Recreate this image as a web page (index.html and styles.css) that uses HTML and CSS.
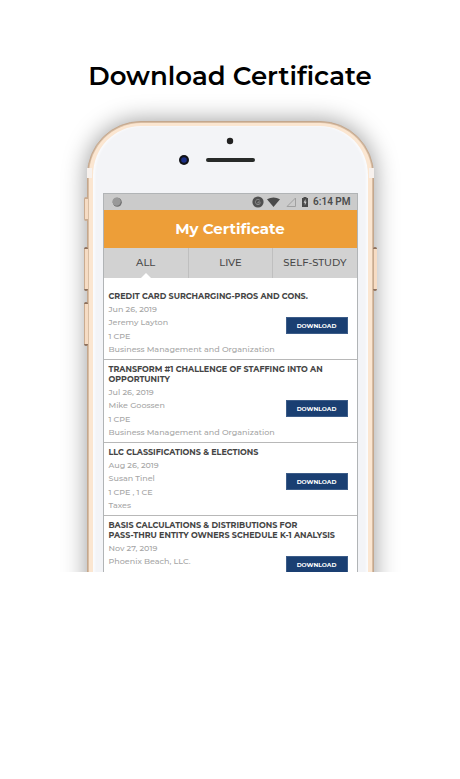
FILE: index.html
```html
<!DOCTYPE html>
<html lang="en">
<head>
<meta charset="utf-8">
<meta name="viewport" content="width=device-width, initial-scale=1">
<title>Download Certificate</title>
<link rel="stylesheet" href="styles.css">
</head>
<body>
<main class="promo">
  <h1 class="promo-title">Download Certificate</h1>
  <div class="phone">
    <span class="side-key mute"></span>
    <span class="side-key volume-up"></span>
    <span class="side-key volume-down"></span>
    <span class="side-key power"></span>
    <span class="band band-left"></span>
    <span class="band band-right"></span>
    <div class="phone-face">
      <svg class="sensors" viewBox="0 0 110 32" aria-hidden="true">
        <circle cx="55" cy="5" r="3.2" fill="#222"/>
        <circle cx="9" cy="24" r="5" fill="#111217"/>
        <circle cx="9" cy="24" r="2.8" fill="#1b2f87"/>
        <rect x="31" y="22" width="49" height="4" rx="2" fill="#272a29"/>
      </svg>
      <div class="screen">
        <div class="status">
          <svg class="status-dot" viewBox="0 0 10 10" aria-hidden="true">
            <circle cx="5.3" cy="5.3" r="4.5" fill="#6f6f6f"/>
            <circle cx="4.6" cy="4.6" r="4.2" fill="#999"/>
          </svg>
          <svg class="status-icons" viewBox="0 0 58 12" aria-hidden="true">
            <circle cx="6" cy="6" r="5.6" fill="#505050"/>
            <path d="M7.8 4.2A2.6 2.6 0 1 0 8.5 6.6M6 6h2.300M6 6v1.600" fill="none" stroke="#999" stroke-width=".8"/>
            <path d="M15 3.200Q21.500-.2 28 3.200L21.500 11Z" fill="#4a4a4a"/>
            <path d="M43.500 2v8.500H35Z" fill="none" stroke="#a0a0a0"/>
            <path d="M51.500 1h3v1h1.500v9h-6V2h1.500Z" fill="#4a4a4a"/>
            <path d="M53.500 3 51.600 6.800h1.200V9.500L54.600 5.800h-1.100Z" fill="#d0d0d0"/>
          </svg>
          <span class="clock">6:14 PM</span>
        </div>
        <h2 class="app-bar">My Certificate</h2>
        <nav class="tabs">
          <a class="tab active" href="#all">ALL</a>
          <a class="tab" href="#live">LIVE</a>
          <a class="tab" href="#self-study">SELF-STUDY</a>
        </nav>
        <div class="list" id="all">
          <article class="item">
            <h3>CREDIT CARD SURCHARGING-PROS AND CONS.</h3>
            <div class="row">
              <div class="meta">
                <div><p>Jun 26, 2019</p><p>Jeremy Layton</p></div>
                <div><p>1 CPE</p><p>Business Management and Organization</p></div>
              </div>
              <button class="download" type="button">DOWNLOAD</button>
            </div>
          </article>
          <article class="item">
            <h3>TRANSFORM #1 CHALLENGE OF STAFFING INTO AN<br>OPPORTUNITY</h3>
            <div class="row">
              <div class="meta">
                <div><p>Jul 26, 2019</p><p>Mike Goossen</p></div>
                <div><p>1 CPE</p><p>Business Management and Organization</p></div>
              </div>
              <button class="download" type="button">DOWNLOAD</button>
            </div>
          </article>
          <article class="item">
            <h3>LLC CLASSIFICATIONS &amp; ELECTIONS</h3>
            <div class="row">
              <div class="meta">
                <div><p>Aug 26, 2019</p><p>Susan Tinel</p></div>
                <div><p>1 CPE , 1 CE</p><p>Taxes</p></div>
              </div>
              <button class="download" type="button">DOWNLOAD</button>
            </div>
          </article>
          <article class="item">
            <h3>BASIS CALCULATIONS &amp; DISTRIBUTIONS FOR<br>PASS-THRU ENTITY OWNERS SCHEDULE K-1 ANALYSIS</h3>
            <div class="row">
              <div class="meta">
                <div><p>Nov 27, 2019</p><p>Phoenix Beach, LLC.</p></div>
              </div>
              <button class="download" type="button">DOWNLOAD</button>
            </div>
          </article>
        </div>
      </div>
    </div>
  </div>
</main>
</body>
</html>
```
FILE: styles.css
```css
* { box-sizing: border-box; }

body, h1, h2, h3, p { margin: 0; }

body {
  background: #fff;
  font-family: Montserrat, Inter, "Liberation Sans", sans-serif;
}

/* The phone runs off the bottom edge of the promo area */
.promo {
  height: 572px;
  padding: 56px 16px 0;
  overflow: hidden;
}

.promo-title {
  font-size: 26px;
  line-height: 40px;
  font-weight: 600;
  text-align: center;
  color: #000;
}

.phone {
  position: relative;
  max-width: 287px;
  margin: 25px auto 0;
  padding: 1px;
  border: 1px solid #c4a78d;
  border-radius: 54px 54px 0 0;
  background: #d8bda3;
  box-shadow: 0 0 24px rgba(0, 0, 0, .4);
}

.phone-face {
  padding: 10px 10px 40px;
  border: solid #fbe6d1;
  border-width: 3px 4px 0;
  border-radius: 52px 52px 0 0;
  background: #f3f4f7;
  box-shadow: inset 2px 0 2px #fafbfd, inset -2px 0 2px #fafbfd;
}

.sensors {
  display: block;
  width: 110px;
  height: 32px;
  margin: 0 auto 25px;
}

.side-key {
  position: absolute;
  left: -4px;
  width: 4px;
  height: 44px;
  border: solid #8d705b;
  border-width: 2px 0;
  border-radius: 2px;
  background: linear-gradient(90deg, #c9ab90 1px, #f6dcc4 1px);
}

.mute { top: 75px; height: 24px; border-color: #c9ab90; }
.volume-up { top: 125px; }
.volume-down { top: 180px; }
.power { top: 125px; left: auto; right: -4px; }

.band {
  position: absolute;
  top: 46px;
  width: 5px;
  height: 10px;
  background: #f7f1ed;
}

.band-left { left: -1px; }
.band-right { right: -1px; }

.screen {
  border: 1px solid #b1b4b6;
  background: #fff;
}

.status {
  display: flex;
  align-items: center;
  height: 16px;
  padding: 0 6px 0 8px;
  background: #cbcbcb;
}

.status-dot { width: 10px; height: 10px; }

.status-icons {
  width: 58px;
  height: 12px;
  margin: 0 3px 0 auto;
}

.clock {
  font: 600 10px/16px Roboto, sans-serif;
  color: #4c4c4c;
}

.app-bar {
  font-size: 15px;
  line-height: 38px;
  font-weight: 700;
  text-align: center;
  color: #fff;
  background: #ed9e38;
}

.tabs {
  display: grid;
  grid-template-columns: repeat(3, 1fr);
  background: #d2d2d2;
}

.tab {
  position: relative;
  font-size: 10px;
  line-height: 30px;
  font-weight: 500;
  text-align: center;
  text-decoration: none;
  color: #484848;
}

.tab + .tab { border-left: 1px solid #bfbfbf; }

.active::after {
  content: "";
  position: absolute;
  bottom: 0;
  left: 50%;
  margin-left: -5px;
  border: solid transparent;
  border-width: 0 5px 5px;
  border-bottom-color: #fff;
}

.list { padding-top: 9px; }

.item {
  padding: 4px 9px 3px 5px;
  border-bottom: 1px solid #b8b8b8;
}

.item h3 {
  margin-bottom: 2px;
  font-size: 8px;
  line-height: 10px;
  font-weight: 700;
  white-space: nowrap;
  color: #444;
}

.row {
  display: flex;
  align-items: flex-start;
  justify-content: space-between;
}

.meta {
  display: grid;
  gap: 1px;
  font-size: 8px;
  line-height: 13px;
  font-weight: 500;
  white-space: nowrap;
  color: #a5a5a5;
}

.download {
  flex: none;
  width: 62px;
  height: 17px;
  margin-top: 14px;
  padding: 0;
  border: 1px solid #3c5c88;
  background: #1a3f72;
  color: #fff;
  font: inherit;
  font-size: 6px;
  font-weight: 700;
}
```
